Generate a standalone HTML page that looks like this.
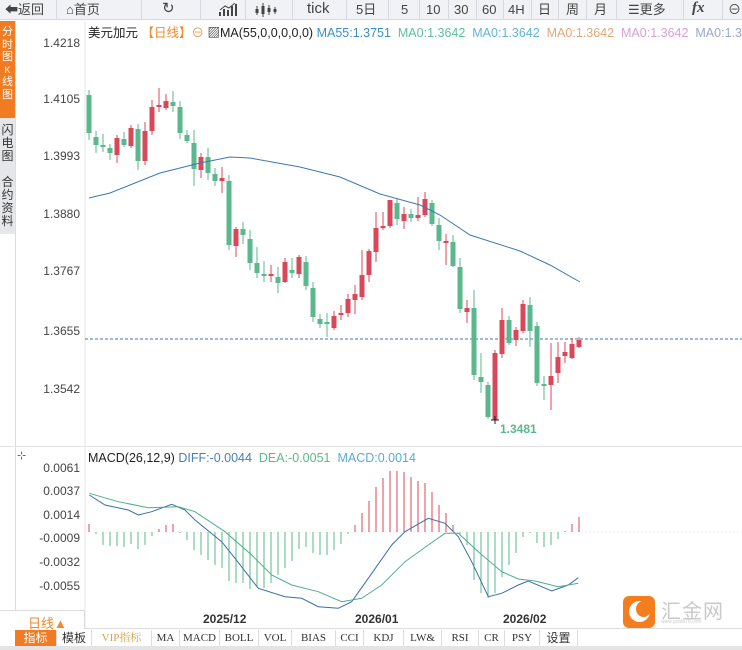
<!DOCTYPE html>
<html><head><meta charset="utf-8"><style>
*{margin:0;padding:0;box-sizing:border-box}
body{width:742px;height:650px;overflow:hidden;background:#fff;font-family:"Liberation Sans","Noto Sans CJK SC",sans-serif;position:relative}
.tb{position:absolute;left:0;top:0;width:742px;height:20px;background:#f1f2f6;border-bottom:1px solid #d8dbe2;font-size:13px;color:#444}
.tb span{position:absolute;top:1px;line-height:17px}
.sep{position:absolute;top:0;width:1px;height:20px;background:#d6d9e0}
.side{position:absolute;left:0;width:15px;font-size:11px;line-height:12.5px;text-align:center;color:#fff}
.ax{position:absolute;font-size:12px;color:#444;right:662px;text-align:right}
.bt{position:absolute;top:630px;height:16px;font-size:11px;font-family:"Liberation Serif","Noto Serif CJK SC",serif;color:#333;border-right:1px solid #ddd;text-align:center;line-height:16px}
</style></head><body>
<div class="tb">
<span style="left:5px">⬅返回</span><div class="sep" style="left:56px"></div>
<span style="left:66px">⌂首页</span><div class="sep" style="left:141px"></div>
<span style="left:162px;font-size:15px;top:0">↻</span><div class="sep" style="left:200px"></div>
<svg style="position:absolute;left:219px;top:3px" width="18" height="14"><path d="M1,13V9M5,13V6M9,13V7M13,13V3M17,13V1" stroke="#444" stroke-width="2"/><path d="M1,7L6,3L10,5L16,0" stroke="#444" fill="none"/></svg>
<div class="sep" style="left:245px"></div>
<svg style="position:absolute;left:255px;top:2px" width="22" height="16"><g stroke="#444"><path d="M2,4V13M8,1V15M14,3V13M20,5V12"/></g><g fill="#444"><rect x="0.5" y="7" width="3" height="4"/><rect x="6.5" y="4" width="3" height="8"/><rect x="12.5" y="6" width="3" height="4"/><rect x="18.5" y="7" width="3" height="3"/></g></svg>
<div class="sep" style="left:292px"></div>
<span style="left:307px;font-size:15px;top:0">tick</span><div class="sep" style="left:346px"></div>
<span style="left:356px">5日</span><div class="sep" style="left:388px"></div>
<span style="left:401px">5</span><div class="sep" style="left:419px"></div>
<span style="left:426px">10</span><div class="sep" style="left:448px"></div>
<span style="left:454px">30</span><div class="sep" style="left:476px"></div>
<span style="left:482px">60</span><div class="sep" style="left:503px"></div>
<span style="left:508px">4H</span><div class="sep" style="left:531px"></div>
<span style="left:538px">日</span><div class="sep" style="left:558px"></div>
<span style="left:566px">周</span><div class="sep" style="left:586px"></div>
<span style="left:594px">月</span><div class="sep" style="left:616px"></div>
<span style="left:628px">☰更多</span><div class="sep" style="left:683px"></div>
<span style="left:692px;font-style:italic;font-weight:bold;font-family:'Liberation Serif',serif;font-size:15px;top:0">fx</span><div class="sep" style="left:722px"></div>
<span style="left:728px">⊖</span>
</div>
<div class="side" style="top:21px;height:97px;background:#f07b22;padding-top:5px">分<br>时<br>图<br><span style="font-size:9px">K</span><br>线<br>图</div>
<div class="side" style="top:118px;height:116px;background:#e6e7eb;color:#333;font-size:12px;line-height:13px;padding-top:6px">闪<br>电<br>图<br><br>合<br>约<br>资<br>料</div>
<div style="position:absolute;left:15px;top:21px;width:1px;height:590px;background:#ddd"></div>
<div class="ax" style="top:36px">1.4218</div>
<div class="ax" style="top:92px">1.4105</div>
<div class="ax" style="top:149px">1.3993</div>
<div class="ax" style="top:207px">1.3880</div>
<div class="ax" style="top:264px">1.3767</div>
<div class="ax" style="top:324px">1.3655</div>
<div class="ax" style="top:382px">1.3542</div>
<div class="ax" style="top:461px">0.0061</div>
<div class="ax" style="top:484px">0.0037</div>
<div class="ax" style="top:508px">0.0014</div>
<div class="ax" style="top:531px">-0.0009</div>
<div class="ax" style="top:555px">-0.0032</div>
<div class="ax" style="top:579px">-0.0055</div>
<div style="position:absolute;left:88px;top:22px;font-size:12.5px;white-space:nowrap;color:#222">美元加元 <span style="color:#f08a2c">【日线】</span><span style="color:#e69a5a">⊖</span> ▨MA(55,0,0,0,0,0) <span style="color:#3b8fc9">MA55:1.3751</span>&nbsp; <span style="color:#5cc09a">MA0:1.3642</span>&nbsp; <span style="color:#62b4d8">MA0:1.3642</span>&nbsp; <span style="color:#e3a67a">MA0:1.3642</span>&nbsp; <span style="color:#d7a0d8">MA0:1.3642</span>&nbsp; <span style="color:#9aa6d8">MA0:1.3</span></div>
<div style="position:absolute;left:88px;top:451px;font-size:12.5px;white-space:nowrap;color:#222">MACD(26,12,9) <span style="color:#4a7fb5">DIFF:-0.0044</span>&nbsp; <span style="color:#5cb88e">DEA:-0.0051</span>&nbsp; <span style="color:#5aaad6">MACD:0.0014</span></div>
<div style="position:absolute;left:17px;top:449px;font-size:11px;color:#555">⊹</div>
<div style="position:absolute;left:0;top:446px;width:742px;height:1px;background:#e2e2e2"></div>
<svg id="s" width="742" height="650" style="position:absolute;left:0;top:0" xmlns="http://www.w3.org/2000/svg"></svg>
<div style="position:absolute;left:500px;top:422px;font-size:12px;color:#5bb88e;font-weight:bold">1.3481</div>
<div style="position:absolute;left:0;top:610px;width:85px;height:19px;border-top:1px solid #ddd;border-right:1px solid #ddd;color:#f08a2c;font-size:13px;padding:2px 0 0 28px">日线▲</div>
<div style="position:absolute;left:203px;top:612px;font-size:12px;font-weight:bold;color:#333">2025/12</div>
<div style="position:absolute;left:355px;top:612px;font-size:12px;font-weight:bold;color:#333">2026/01</div>
<div style="position:absolute;left:503px;top:612px;font-size:12px;font-weight:bold;color:#333">2026/02</div>
<div style="position:absolute;left:85px;top:628px;width:657px;height:1px;background:#ddd"></div>
<div style="position:absolute;left:623px;top:596px;width:32px;height:32px;background:#f47d1e;border-radius:6px"></div>
<div style="position:absolute;left:629px;top:601px;width:21px;height:21px;border-radius:50%;background:#fff"></div>
<div style="position:absolute;left:636px;top:601px;width:15px;height:16px;border-radius:50%;background:#f47d1e"></div>
<div style="position:absolute;left:661px;top:595px;font-size:20px;color:#c9c9c9;letter-spacing:1px">汇金网</div>
<div style="position:absolute;left:661px;top:619px;font-size:5px;color:#ccc">www.gold678.com</div>
<div class="bt" style="left:15px;width:42px;background:#f07b22;color:#fff;font-family:'Liberation Sans','Noto Sans CJK SC',sans-serif;font-size:12px">指标</div>
<div class="bt" style="left:57px;width:35px;font-family:'Liberation Sans','Noto Sans CJK SC',sans-serif;font-size:12px">模板</div>
<div class="bt" style="left:92px;width:60px;color:#d9a04a">VIP指标</div>
<div class="bt" style="left:152px;width:28px">MA</div>
<div class="bt" style="left:180px;width:40px">MACD</div>
<div class="bt" style="left:220px;width:39px">BOLL</div>
<div class="bt" style="left:259px;width:33px">VOL</div>
<div class="bt" style="left:292px;width:44px">BIAS</div>
<div class="bt" style="left:336px;width:28px">CCI</div>
<div class="bt" style="left:364px;width:40px">KDJ</div>
<div class="bt" style="left:404px;width:38px">LW&amp;</div>
<div class="bt" style="left:442px;width:37px">RSI</div>
<div class="bt" style="left:479px;width:26px">CR</div>
<div class="bt" style="left:505px;width:35px">PSY</div>
<div class="bt" style="left:540px;width:38px;font-family:'Liberation Sans','Noto Sans CJK SC',sans-serif;font-size:12px">设置</div>
<div style="position:absolute;left:0;top:646px;width:742px;height:4px;background:#e4e4e4"></div>
<script>
var s=document.getElementById('s'),h='';
h+='<line x1="85" y1="21" x2="85" y2="628" stroke="#e6e6e6"/>';
h+='<line x1="85" y1="339" x2="742" y2="339" stroke="#3a7ab0" stroke-dasharray="3,2"/>';
h+='<line x1="85" y1="532" x2="742" y2="532" stroke="#eee" stroke-dasharray="2,2"/>';
var C=[[95,133,90,140,0],[137,145,131,153,0],[145,147,134,152,0],[148,153,144,160,0],[138,155,135,163,1],[139,145,132,147,0],[128,146,125,148,1],[129,161,124,170,0],[131,161,122,165,1],[107,131,100,135,1],[105,107,88,112,1],[101,108,94,110,1],[102,106,91,112,0],[107,133,101,139,0],[135,141,130,143,0],[143,169,130,186,0],[157,170,153,178,1],[157,173,148,180,0],[174,181,168,186,0],[178,181,167,193,1],[181,245,175,250,0],[229,246,227,257,1],[229,235,222,244,0],[239,263,230,270,0],[263,273,247,278,0],[274,276,261,282,0],[274,276,265,282,1],[277,283,267,293,0],[262,282,258,283,1],[270,273,258,278,0],[257,274,255,278,1],[262,286,256,290,0],[288,317,282,322,0],[319,324,314,328,0],[322,323,313,337,0],[316,328,311,330,1],[313,315,305,320,1],[299,313,294,317,1],[294,300,285,314,1],[275,297,250,300,1],[251,275,249,282,1],[228,252,212,262,1],[226,228,212,230,1],[200,226,200,228,1],[203,219,198,225,0],[214,221,207,229,1],[214,218,209,222,0],[215,218,197,221,1],[199,215,192,217,1],[203,224,200,226,0],[225,241,218,250,0],[241,243,234,265,1],[242,266,235,267,0],[267,309,258,313,0],[308,312,300,323,1],[308,375,290,380,0],[377,382,353,393,0],[385,417,382,419,0],[353,420,350,420,1],[320,354,308,358,1],[320,343,316,345,0],[330,340,327,346,1],[304,331,300,333,1],[305,331,297,347,0],[326,383,322,386,0],[384,386,376,400,0],[376,385,343,410,1],[357,373,342,383,1],[352,356,342,363,1],[344,358,338,359,1],[340,347,337,348,1]];
C.forEach(function(c,i){var x=89+i*7,col=c[4]?'#d8475a':'#5bb88e';h+='<line x1="'+x+'" y1="'+c[2]+'" x2="'+x+'" y2="'+c[3]+'" stroke="'+col+'"/>';h+='<rect x="'+(x-2.5)+'" y="'+c[0]+'" width="5" height="'+Math.max(2,c[1]-c[0])+'" fill="'+col+'"/>';});
h+='<polyline fill="none" stroke="#3a7ab0" stroke-width="1" points="89,198 110,193 130,185 160,173 200,163 230,157 250,158 300,167 340,177 380,194 420,205 440,215 470,235 520,251 550,265 580,282"/>';
h+='<path d="M491,420h8M495,416v8" stroke="#222"/>';
var Hb=[524,534,545,546,546,547,544,549,545,536,529,525,524,533,540,550,555,560,565,568,581,583,583,589,587,588,583,575,568,561,549,547,553,555,555,550,544,534,525,513,501,487,478,471,471,472,477,481,483,492,505,513,525,535,545,580,593,598,593,577,565,553,537,533,543,547,545,539,531,524,517];
Hb.forEach(function(y,i){var x=89+i*7;h+='<line x1="'+x+'" y1="532" x2="'+x+'" y2="'+y+'" stroke="'+(y<532?'#d8475a':'#5bb88e')+'"/>';});
function P(a){return a.map(function(p){return (85+p[0]/3).toFixed(1)+','+(445+p[1]/3).toFixed(1)}).join(' ');}
var D=[[13,150],[60,180],[130,195],[160,210],[200,200],[260,178],[300,195],[330,225],[410,290],[450,340],[520,430],[600,455],[650,460],[700,485],[760,490],[800,470],[850,400],[920,300],[960,260],[1030,220],[1080,235],[1120,275],[1160,350],[1210,455],[1250,445],[1300,420],[1330,408],[1400,438],[1450,420],[1480,398]];
var E=[[13,145],[100,170],[190,188],[280,185],[330,200],[420,260],[500,330],[560,390],[620,420],[700,440],[770,470],[830,460],[890,420],[960,350],[1030,300],[1080,265],[1120,265],[1180,320],[1250,380],[1300,402],[1350,408],[1420,425],[1480,415]];
h+='<polyline fill="none" stroke="#3a6fa8" points="'+P(D)+'"/>';
h+='<polyline fill="none" stroke="#4fae8a" points="'+P(E)+'"/>';
s.innerHTML=h;
</script>
</body></html>
